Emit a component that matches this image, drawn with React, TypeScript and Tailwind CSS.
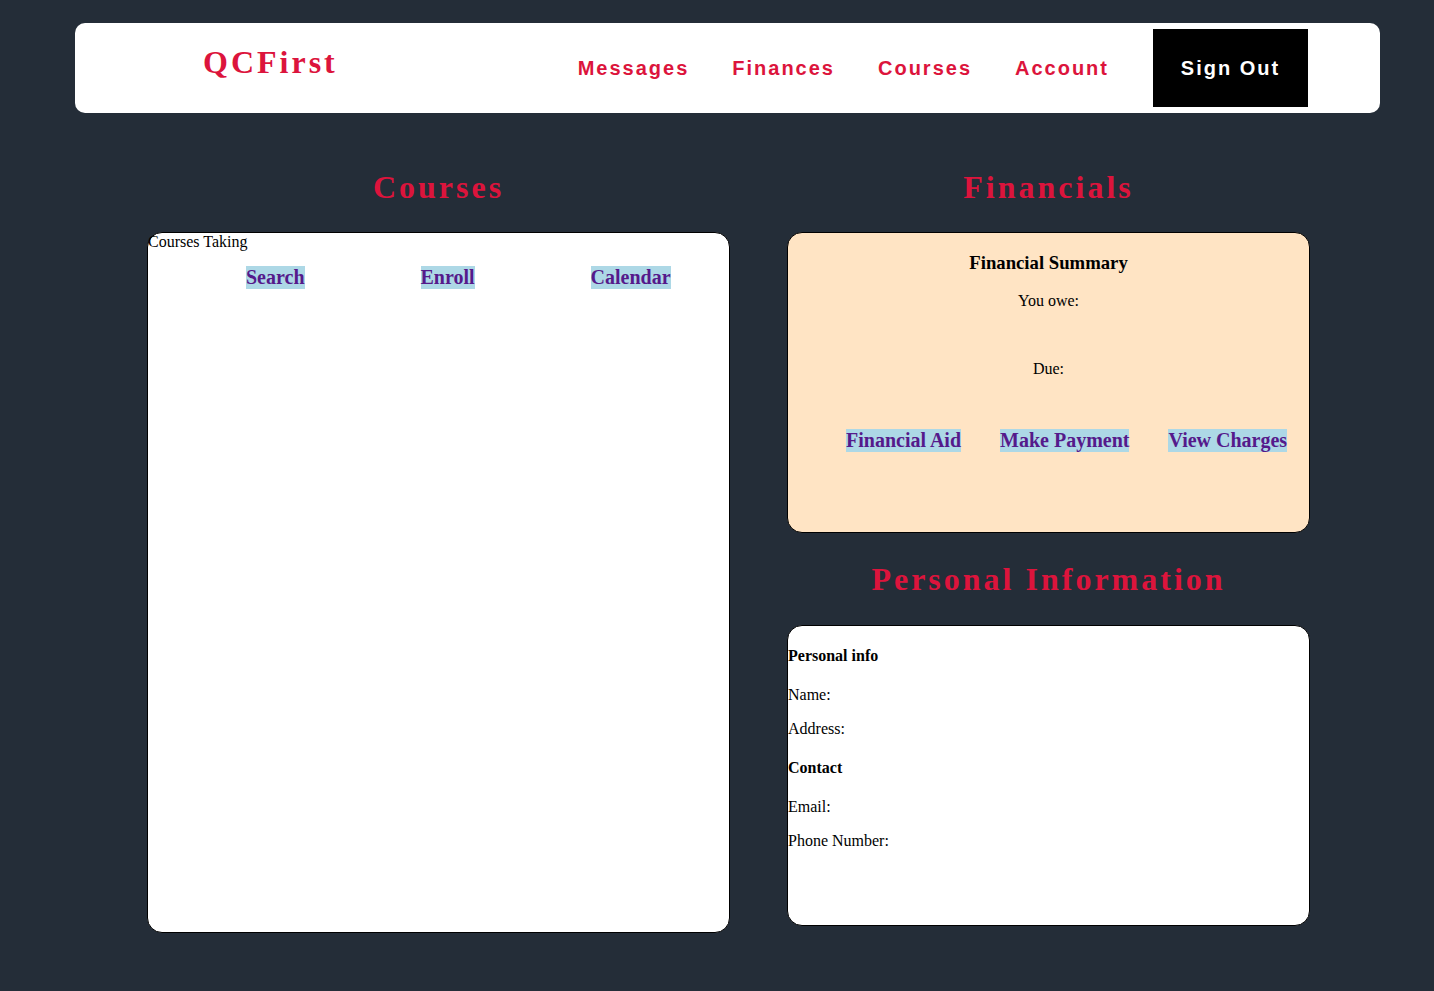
import React from "react";

const serif = "font-['Liberation_Serif','Times_New_Roman',serif]";
const sans = "font-['Liberation_Sans',Arial,sans-serif]";

const navLinks = ["Messages", "Finances", "Courses", "Account"];

const SectionTitle = ({ children, className = "" }: { children: React.ReactNode; className?: string }) => (
  <h2
    className={`${serif} text-[32px] leading-[37px] font-bold tracking-[3px] text-[#dc143c] text-center ${className}`}
  >
    {children}
  </h2>
);

const LinkChip = ({ label }: { label: string }) => (
  <a className="bg-[#add8e6] text-[#551a8b] font-bold cursor-pointer">{label}</a>
);

export default function App() {
  return (
    <div className={`min-h-[991px] bg-[#242d38] pt-[23px] ${serif}`}>
      {/* Top bar */}
      <header className="ml-[75px] w-[1305px] h-[90px] bg-white rounded-[10px] flex items-center">
        <h1 className="self-start mt-[21px] ml-[128px] text-[32px] leading-[37px] font-bold tracking-[3px] text-[#dc143c]">
          QCFirst
        </h1>
        <nav className={`ml-auto mr-[72px] flex items-center ${sans}`}>
          <div className="flex items-center gap-[43px]">
            {navLinks.map((l) => (
              <a key={l} className="text-[20px] font-bold tracking-[0.1em] text-[#dc143c] cursor-pointer">
                {l}
              </a>
            ))}
          </div>
          <button className="ml-[44px] w-[155px] h-[78px] bg-black text-white text-[20px] font-bold tracking-[0.1em] flex items-center justify-center">
            Sign Out
          </button>
        </nav>
      </header>

      <main className="flex items-start pl-[147px] gap-[57px] mt-[56px] pb-[58px]">
        {/* Courses */}
        <section className="w-[583px]">
          <SectionTitle>Courses</SectionTitle>
          <div className="mt-[26px] h-[701px] bg-white border border-black rounded-[15px] text-black">
            <div className="text-[16px] leading-[18px]">Courses Taking</div>
            <div className="mt-[15px] pl-[98px] flex gap-[116px] text-[20px] leading-[23px]">
              <LinkChip label="Search" />
              <LinkChip label="Enroll" />
              <LinkChip label="Calendar" />
            </div>
          </div>
        </section>

        {/* Right column */}
        <section className="w-[523px]">
          <SectionTitle>Financials</SectionTitle>
          <div className="mt-[26px] h-[301px] bg-[#ffe4c4] border border-black rounded-[15px] text-black">
            <h3 className="mt-[19px] text-center text-[18.72px] leading-[21px] font-bold">Financial Summary</h3>
            <p className="mt-[19px] text-center text-[16px] leading-[18px]">You owe:</p>
            <p className="mt-[50px] text-center text-[16px] leading-[18px]">Due:</p>
            <div className="mt-[51px] pl-[58px] flex gap-[39px] text-[20px] leading-[23px]">
              <LinkChip label="Financial Aid" />
              <LinkChip label="Make Payment" />
              <LinkChip label="View Charges" />
            </div>
          </div>

          <SectionTitle className="mt-[28px]">Personal Information</SectionTitle>
          <div className="mt-[27px] h-[301px] bg-white border border-black rounded-[15px] text-black text-[16px] leading-[18px]">
            <h4 className="mt-[21px] font-bold">Personal info</h4>
            <p className="mt-[21px]">Name:</p>
            <p className="mt-[16px]">Address:</p>
            <h4 className="mt-[21px] font-bold">Contact</h4>
            <p className="mt-[21px]">Email:</p>
            <p className="mt-[16px]">Phone Number:</p>
          </div>
        </section>
      </main>
    </div>
  );
}
